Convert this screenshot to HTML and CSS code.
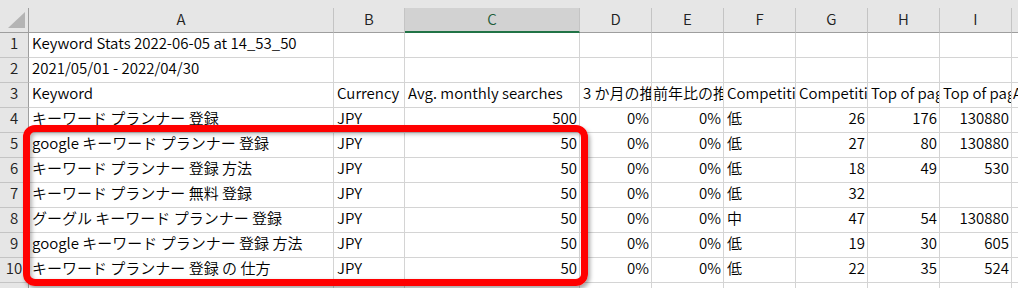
FILE: index.html
```html
<!DOCTYPE html>
<html lang="ja">
<head>
<meta charset="utf-8">
<link rel="stylesheet" href="styles.css">
</head>
<body>
<div class="sheet">
  <div class="strip"></div>
  <div class="grid">
    <div class="hd corner"><svg width="17" height="16" viewBox="0 0 17 16"><polygon points="17,0 17,16 0,16" fill="#b4b4b4"/></svg></div>
    <div class="hd col">A</div>
    <div class="hd col">B</div>
    <div class="hd col sel">C</div>
    <div class="hd col">D</div>
    <div class="hd col">E</div>
    <div class="hd col">F</div>
    <div class="hd col">G</div>
    <div class="hd col">H</div>
    <div class="hd col">I</div>
    <div class="hd col">J</div>

    <div class="rn">1</div><div class="c">Keyword Stats 2022-06-05 at 14_53_50</div><div class="c"></div><div class="c"></div><div class="c"></div><div class="c"></div><div class="c"></div><div class="c"></div><div class="c"></div><div class="c"></div><div class="c"></div>

    <div class="rn">2</div><div class="c">2021/05/01 - 2022/04/30</div><div class="c"></div><div class="c"></div><div class="c"></div><div class="c"></div><div class="c"></div><div class="c"></div><div class="c"></div><div class="c"></div><div class="c"></div>

    <div class="rn">3</div><div class="c">Keyword</div><div class="c">Currency</div><div class="c">Avg. monthly searches</div><div class="c">3 か月の推移</div><div class="c tight">前年比の推移</div><div class="c">Competition</div><div class="c">Competition (indexed value)</div><div class="c">Top of page bid (low range)</div><div class="c">Top of page bid (high range)</div><div class="c tight">Ad impression share</div>

    <div class="rn">4</div><div class="c">キーワード プランナー 登録</div><div class="c">JPY</div><div class="c n">500</div><div class="c n">0%</div><div class="c n">0%</div><div class="c">低</div><div class="c n">26</div><div class="c n">176</div><div class="c n">130880</div><div class="c"></div>

    <div class="rn">5</div><div class="c">google キーワード プランナー 登録</div><div class="c">JPY</div><div class="c n">50</div><div class="c n">0%</div><div class="c n">0%</div><div class="c">低</div><div class="c n">27</div><div class="c n">80</div><div class="c n">130880</div><div class="c"></div>

    <div class="rn">6</div><div class="c">キーワード プランナー 登録 方法</div><div class="c">JPY</div><div class="c n">50</div><div class="c n">0%</div><div class="c n">0%</div><div class="c">低</div><div class="c n">18</div><div class="c n">49</div><div class="c n">530</div><div class="c"></div>

    <div class="rn">7</div><div class="c">キーワード プランナー 無料 登録</div><div class="c">JPY</div><div class="c n">50</div><div class="c n">0%</div><div class="c n">0%</div><div class="c">低</div><div class="c n">32</div><div class="c n"></div><div class="c n"></div><div class="c"></div>

    <div class="rn">8</div><div class="c">グーグル キーワード プランナー 登録</div><div class="c">JPY</div><div class="c n">50</div><div class="c n">0%</div><div class="c n">0%</div><div class="c">中</div><div class="c n">47</div><div class="c n">54</div><div class="c n">130880</div><div class="c"></div>

    <div class="rn">9</div><div class="c">google キーワード プランナー 登録 方法</div><div class="c">JPY</div><div class="c n">50</div><div class="c n">0%</div><div class="c n">0%</div><div class="c">低</div><div class="c n">19</div><div class="c n">30</div><div class="c n">605</div><div class="c"></div>

    <div class="rn">10</div><div class="c">キーワード プランナー 登録 の 仕方</div><div class="c">JPY</div><div class="c n">50</div><div class="c n">0%</div><div class="c n">0%</div><div class="c">低</div><div class="c n">22</div><div class="c n">35</div><div class="c n">524</div><div class="c"></div>

    <div class="rn">11</div><div class="c"></div><div class="c"></div><div class="c"></div><div class="c"></div><div class="c"></div><div class="c"></div><div class="c"></div><div class="c"></div><div class="c"></div><div class="c"></div>
  </div>
  <div class="highlight"></div>
</div>
</body>
</html>
```

FILE: styles.css
```css
html, body {
  margin: 0;
  padding: 0;
  background: #ffffff;
  overflow: hidden;
}

.sheet {
  position: relative;
  width: 1018px;
  height: 288px;
  overflow: hidden;
  font-family: "Noto Sans CJK JP", sans-serif;
  font-size: 15px;
  font-weight: 350;
  color: #000;
}

.strip {
  width: 1084px;
  height: 8px;
  background: #e6e6e6;
}

.grid {
  display: grid;
  width: 1084px;
  grid-template-columns: 29px 305px 71px 175px 72px 72px 72px 72px 72px 72px 72px;
}

.hd, .rn, .c {
  height: 24px;
  line-height: 20px;
  box-sizing: content-box;
  overflow: hidden;
  white-space: nowrap;
}

.hd {
  background: #e6e6e6;
  color: #222;
  text-align: center;
  line-height: 22px;
  border-right: 1px solid #c4c4c4;
  border-bottom: 1px solid #9e9e9e;
}

.corner {
  display: flex;
  align-items: flex-end;
  justify-content: flex-end;
  padding: 0 3px 0 0;
  box-sizing: border-box;
  height: 25px;
  border-right-color: #9e9e9e;
}

.corner svg {
  margin-bottom: 4px;
}

.hd.sel {
  background: #d2d2d2;
  color: #1e5c3a;
  border-bottom: 2px solid #217346;
  height: 23px;
}

.rn {
  background: #e6e6e6;
  color: #222;
  text-align: center;
  border-right: 1px solid #9e9e9e;
  border-bottom: 1px solid #c4c4c4;
}

.c {
  background: #fff;
  border-right: 1px solid #d4d4d4;
  border-bottom: 1px solid #d4d4d4;
  padding: 0 3px;
}

.c.tight {
  padding-left: 1px;
}

.c.n {
  text-align: right;
  padding-right: 2px;
}

.highlight {
  position: absolute;
  left: 23px;
  top: 125px;
  width: 565px;
  height: 161px;
  box-sizing: border-box;
  border: 7px solid #ff0000;
  border-radius: 12px;
  box-shadow: 2px 3px 4px rgba(0, 0, 0, 0.35), inset 2px 2px 4px rgba(0, 0, 0, 0.3);
  pointer-events: none;
}
```
